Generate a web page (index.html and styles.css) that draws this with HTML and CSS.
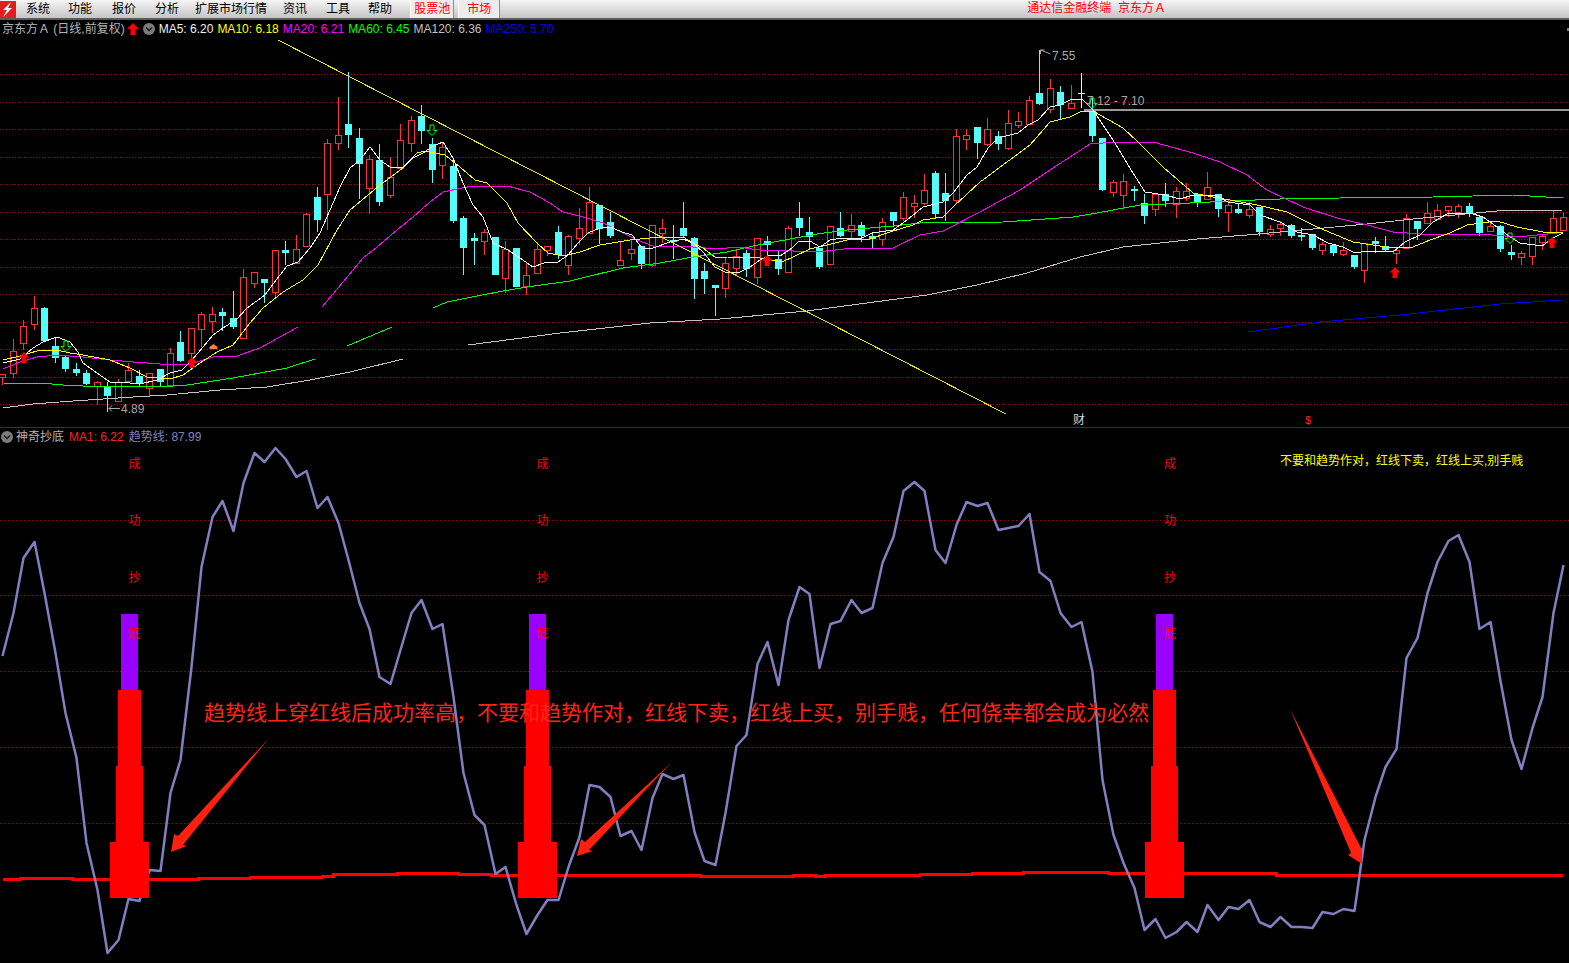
FILE: index.html
```html
<!DOCTYPE html>
<html lang="zh-CN">
<head>
<meta charset="utf-8">
<title>通达信金融终端 京东方Ａ</title>
<link rel="stylesheet" href="styles.css">
</head>
<body>
<div class="app">
  <header class="menubar">
    <svg class="logo" viewBox="0 0 16 17" width="16" height="17" aria-hidden="true">
      <rect width="16" height="17" fill="#e02020"/>
      <path d="M11 1 3 9h4l-4 7 9-9H8l3-6z" fill="#fff"/>
    </svg>
    <nav class="menu">
      <span class="menu-item">系统</span>
      <span class="menu-item">功能</span>
      <span class="menu-item">报价</span>
      <span class="menu-item">分析</span>
      <span class="menu-item">扩展市场行情</span>
      <span class="menu-item">资讯</span>
      <span class="menu-item">工具</span>
      <span class="menu-item">帮助</span>
      <span class="menu-tab">股票池</span>
      <span class="menu-tab">市场</span>
    </nav>
    <span class="title">通达信金融终端&nbsp; 京东方Ａ</span>
  </header>

  <section class="pane pane-upper">
    <div class="legend legend-upper">
      <span class="grey stock-name">京东方Ａ (日线,前复权)</span>
      <svg class="icon-up" viewBox="0 0 12 12" width="12" height="12" aria-hidden="true"><path d="M6 0l6 6H8.500v6h-5V6H0z" fill="#ff0000"/></svg>
      <svg class="icon-circle" viewBox="0 0 12 12" width="12" height="12" aria-hidden="true"><circle cx="6" cy="6" r="6" fill="#7c7c7c"/><path d="M3 4.500l3 3 3-3" fill="none" stroke="#1c1c1c" stroke-width="1.500"/></svg>
      <span class="white">MA5: 6.20</span>
      <span class="yellow">MA10: 6.18</span>
      <span class="magenta">MA20: 6.21</span>
      <span class="green">MA60: 6.45</span>
      <span class="silver">MA120: 6.36</span>
      <span class="blue">MA250: 5.70</span>
    </div>
    <span class="corner-mark"></span>
    <svg class="chart" viewBox="0 20 1569 407" width="1569" height="407">
      <defs>
        <path id="up-arrow" d="M0 0l5.500 5.500H2.500V11h-5V5.500h-3z" fill="#ff0000"/>
        <path id="down-arrow" d="M-2 0h4v5.500h3l-5 5-5-5h3z" fill="none" stroke="#00ff00"/>
      </defs>
      <path class="grid-top" d="M0 74.500H1569M0 102.500H1569M0 129.500H1569M0 157.500H1569M0 184.500H1569M0 212.500H1569M0 239.500H1569M0 267.500H1569M0 294.500H1569M0 322.500H1569M0 349.500H1569M0 377.500H1569M0 404.500H1569"/>
      <g id="candles"></g>
      <path class="level" d="M1084 110H1569"/>
      <polyline class="ma ma120" points="3,408 33,404 73,401 133,397 167,395 220,390 267,387 310,380 350,372 403,359"/>
      <polyline class="ma ma120" points="468,345 560,333 650,323 720,319 807,311 927,295 977,285 1027,273 1080,257 1123,247 1197,239 1247,235 1313,229 1367,224 1413,219 1497,211 1563,210"/>
      <polyline class="ma ma250" points="1248,332 1320,322 1400,315 1500,304 1562,300"/>
      <polyline class="ma ma60" points="3,383 52,384 63,385 83,386 173,386 187,385 207,382 233,378 260,373 287,368 315,359"/>
      <polyline class="ma ma60" points="347,346 392,327"/>
      <polyline class="ma ma60" points="433,308 447,302 477,296 503,291 527,287 570,281 623,268 660,263 693,257 727,252 753,246 790,239 817,234 847,230 893,226 920,223 1003,222 1073,217 1097,213 1140,205 1190,203 1230,201 1280,199 1340,198 1433,197 1513,195 1563,198"/>
      <polyline class="ma ma20" points="3,369 20,362 37,357 57,355 83,357 110,360 133,362 160,364 187,365 213,357 237,356 260,348 280,337 298,327"/>
      <polyline class="ma ma20" points="322,307 343,282 363,258 377,247 397,230 413,217 430,202 443,192 467,187 483,186 507,186 530,192 550,203 563,212 583,217 603,223 617,230 637,240 653,246 680,246 693,247 717,249 737,247 760,250 793,251 817,252 853,248 893,248 920,235 943,231 980,212 1020,190 1053,168 1090,144 1117,142 1153,142 1193,153 1220,162 1247,175 1267,190 1303,207 1337,218 1367,225 1393,232 1420,234 1480,234 1517,237 1557,233"/>
      <polyline class="ma ma10" points="3,360 20,356 37,351 57,350 70,353 83,355 110,360 130,368 147,377 170,379 183,375 200,363 217,352 233,345 250,323 263,308 283,292 303,280 318,265 337,230 350,210 362,200 380,185 403,168 417,153 425,151 445,155 460,167 475,180 487,183 507,203 518,223 537,243 548,253 563,256 580,252 600,245 630,240 660,237 683,237 693,243 703,248 715,257 727,257 760,258 782,262 793,257 810,249 827,245 847,240 870,239 890,232 913,225 923,220 943,217 953,207 980,182 1007,162 1030,145 1050,122 1070,117 1082,111 1093,111 1123,128 1138,142 1163,167 1193,193 1213,197 1230,200 1257,205 1287,212 1317,227 1353,242 1393,248 1413,247 1430,240 1450,233 1467,225 1497,221 1517,227 1543,232 1563,233"/>
      <polyline class="ma ma5" points="3,363 20,359 33,348 43,342 57,337 70,342 78,352 83,363 97,373 110,382 130,383 140,384 157,380 170,373 182,370 192,360 203,347 213,335 223,328 237,319 247,308 265,295 280,275 287,266 298,262 310,248 320,233 330,210 340,187 350,168 360,160 370,147 380,160 390,167 402,168 413,158 423,153 433,146 443,142 453,158 463,183 473,205 483,217 493,243 508,250 520,258 533,267 547,262 558,262 568,255 578,243 588,233 600,228 610,227 622,232 632,235 642,248 653,248 670,242 683,239 693,243 703,252 715,267 725,272 740,272 750,267 760,260 770,255 780,256 792,248 798,242 810,241 820,247 830,240 842,238 862,238 872,233 893,230 907,220 923,207 943,202 953,193 967,175 977,167 988,148 998,138 1018,133 1028,125 1038,120 1050,107 1060,105 1070,100 1082,99 1093,110 1113,140 1133,173 1145,192 1165,195 1180,199 1193,195 1217,196 1228,202 1250,205 1260,215 1280,222 1297,232 1313,235 1328,243 1343,247 1355,253 1367,251 1393,252 1405,242 1420,235 1433,222 1447,214 1470,213 1483,217 1497,227 1510,237 1520,243 1542,246 1553,238 1563,233"/>
      <path class="trend" d="M278 40L1006 414"/>
      <use href="#up-arrow" x="24" y="352"/>
      <use href="#up-arrow" x="192" y="357"/>
      <use href="#up-arrow" x="767" y="255"/>
      <use href="#up-arrow" x="1395" y="267"/>
      <use href="#up-arrow" x="1552" y="237"/>
      <use href="#down-arrow" x="66" y="341"/>
      <use href="#down-arrow" x="432" y="125"/>
      <use href="#down-arrow" x="1092" y="98"/>
      <use href="#down-arrow" x="1510" y="233"/>
      <path class="peak-mark" d="M213.500 344l4 3v2h-8v-2z"/>
      <path class="price-arrow" d="M1040.500 50l10 4M1040.500 50h4M1040.500 50v4M109 408.500h11M109 408.500l3-3M109 408.500l3 3"/>
      <text class="price" x="1052" y="60">7.55</text>
      <text class="price" x="1087" y="105">7.12 - 7.10</text>
      <text class="price" x="121" y="413">4.89</text>
      <text class="tag-cai" x="1073" y="424">财</text>
      <text class="tag-s" x="1305" y="424">$</text>
    </svg>
  </section>

  <div class="divider"></div>

  <section class="pane pane-lower">
    <div class="legend legend-lower">
      <svg class="icon-circle" viewBox="0 0 12 12" width="12" height="12" aria-hidden="true"><circle cx="6" cy="6" r="6" fill="#7c7c7c"/><path d="M3 4.500l3 3 3-3" fill="none" stroke="#1c1c1c" stroke-width="1.500"/></svg>
      <span class="grey">神奇抄底</span>
      <span class="red">MA1: 6.22</span>
      <span class="violet">趋势线: 87.99</span>
    </div>
    <svg class="chart" viewBox="0 428 1569 535" width="1569" height="535">
      <path class="grid-low" d="M0 520.500H1569M0 595.500H1569M0 671.500H1569M0 747.500H1569M0 823.500H1569"/>
      <path class="base-line" d="M3 879H20V878H72V879H198V878H250V877H322V876H333V874H397V873.500H458V874H491V875H700V876H793V875H815V876H825V875H920V874H972V873H1023V872H1108V873H1276V874H1276V875H1563"/>
      <polyline id="trend-line" class="trend-line" points=""/>
      <path class="bar-top" d="M121 614h17v76h-17zM529 614h17v76h-17zM1156 614h17v76h-17z"/>
      <path class="bar" d="M118 690h23v76h-23zM116 766h27v76h-27zM110 842h39v56h-39zM526 690h23v76h-23zM524 766h27v76h-27zM518 842h39v56h-39zM1153 690h23v76h-23zM1151 766h27v76h-27zM1145 842h39v56h-39z"/>
      <text class="signal" x="134.500" y="468">成</text>
      <text class="signal" x="134.500" y="525">功</text>
      <text class="signal" x="134.500" y="582">抄</text>
      <text class="signal" x="134.500" y="638">底</text>
      <text class="signal" x="542.500" y="468">成</text>
      <text class="signal" x="542.500" y="525">功</text>
      <text class="signal" x="542.500" y="582">抄</text>
      <text class="signal" x="542.500" y="638">底</text>
      <text class="signal" x="1170" y="468">成</text>
      <text class="signal" x="1170" y="525">功</text>
      <text class="signal" x="1170" y="582">抄</text>
      <text class="signal" x="1170" y="638">底</text>
      <text class="note" x="204" y="720">趋势线上穿红线后成功率高，不要和趋势作对，红线下卖，红线上买，别手贱，任何侥幸都会成为必然</text>
      <text class="tip" x="1280" y="465">不要和趋势作对，红线下卖，红线上买,别手贱</text>
      <path class="pointer" d="M269 738L178 836 174 834 171 852 187 846 183 845z"/>
      <path class="pointer" d="M671 763L585 842 581 839 577 856 593 851 589 850z"/>
      <path class="pointer" d="M1290 709L1351 853 1348 855 1362 864 1362 848 1361 848z"/>
    </svg>
  </section>
</div>
<script src="chart.js"></script>
</body>
</html>
```

FILE: styles.css
```css
* { box-sizing: border-box; }
html, body { margin: 0; padding: 0; background: #000; }
body {
  width: 1569px;
  height: 963px;
  overflow: hidden;
  font-family: "Liberation Sans", "Noto Sans CJK SC", sans-serif;
  font-size: 12px;
}
.app { display: flex; flex-direction: column; height: 963px; }

.menubar {
  display: flex;
  align-items: center;
  height: 20px;
  flex: none;
  color: #000;
  background: linear-gradient(#f6f6f6, #c9c9c9 90%);
  border-bottom: 2px solid #5a5a5a;
}
.logo { display: block; flex: none; }
.menu { display: flex; align-items: center; height: 100%; margin-left: 10px; gap: 18px; }
.menu-item { line-height: 18px; white-space: nowrap; }
.menu-item:nth-child(3) { margin-left: 2px; }
.menu-item:nth-child(4) { margin-left: 1px; }
.menu-item:nth-child(5) { margin-left: -2px; }
.menu-item:nth-child(6) { margin-left: -2px; }
.menu-item:nth-child(7) { margin-left: 1px; }
.menu-tab {
  height: 18px;
  line-height: 18px;
  color: #ff0000;
  padding: 0 3px;
  border-left: 1px solid #fff;
  border-right: 1px solid #8c8c8c;
  background: #ececec;
}
.menu-tab:nth-child(9) { margin-left: 0; }
.menu-tab:nth-child(10) { margin-left: -14px; padding: 0 8px; }
.title { margin-left: auto; margin-right: 403px; color: #ff0000; line-height: 14px; margin-bottom: 3px; white-space: nowrap; }

.pane { position: relative; flex: none; }
.pane-upper { height: 407px; }
.pane-lower { height: 535px; }
.chart { display: block; }
.divider { height: 1px; flex: none; background: #a80000; }

.legend {
  position: absolute;
  left: 0;
  display: flex;
  align-items: center;
  white-space: nowrap;
  line-height: 14px;
  z-index: 1;
}
.legend-upper { top: 2px; left: 2px; gap: 4px; }
.stock-name { margin-right: -2px; }
.legend-lower { top: 2px; left: 1px; gap: 5px; }
.legend-lower .grey { margin-left: -2px; }
.icon-up, .icon-circle { display: block; flex: none; }
.grey { color: #b4b4b4; }
.white { color: #f0f0f0; }
.yellow { color: #ffff00; }
.magenta { color: #ff00ff; }
.green { color: #00ff00; }
.silver { color: #c0c0c0; }
.blue { color: #0000ff; }
.red { color: #ff2020; }
.violet { color: #8080c0; }
.corner-mark { position: absolute; top: 8px; right: 0; width: 2px; height: 3px; background: #808080; }

.grid-top { stroke: #c00000; stroke-width: 1; stroke-dasharray: 1 2; fill: none; shape-rendering: crispEdges; }
.grid-low { stroke: #a80000; stroke-width: 1; stroke-dasharray: 1 3; fill: none; shape-rendering: crispEdges; }
.candle-red { fill: #000; stroke: #ff3232; stroke-width: 1; shape-rendering: crispEdges; }
.candle-cyan { fill: #54fcfc; stroke: none; shape-rendering: crispEdges; }
.wick-cyan { fill: none; stroke: #54fcfc; stroke-width: 1; shape-rendering: crispEdges; }
.candle-white { fill: none; stroke: #f0f0f0; stroke-width: 1; shape-rendering: crispEdges; }
.level { stroke: #989898; stroke-width: 2; fill: none; shape-rendering: crispEdges; }
.ma { fill: none; stroke-width: 1; shape-rendering: crispEdges; stroke-linejoin: round; }
.ma5 { stroke: #f4f4f4; }
.ma10 { stroke: #ffff00; }
.ma20 { stroke: #ff00ff; }
.ma60 { stroke: #00ff00; }
.ma120 { stroke: #c4c4c4; }
.ma250 { stroke: #0000e8; }
.trend { stroke: #e8e800; stroke-width: 1; fill: none; shape-rendering: crispEdges; }
.peak-mark { fill: #ff8040; }
.price-arrow { stroke: #a8a8a8; stroke-width: 1; fill: none; }
.price { fill: #a8a8a8; font-size: 12px; }
.tag-cai { fill: #bcd8ff; font-size: 12px; }
.tag-s { fill: #ff2020; font-size: 11px; }

.base-line { fill: none; stroke: #ff0000; stroke-width: 3; shape-rendering: crispEdges; }
.trend-line { fill: none; stroke: #8080c0; stroke-width: 2.500; stroke-linejoin: round; }
.bar-top { fill: #9900ff; shape-rendering: crispEdges; }
.bar { fill: #ff0000; shape-rendering: crispEdges; }
.signal { fill: #ff0000; font-size: 12px; text-anchor: middle; }
.note { fill: #ff2318; font-size: 21px; }
.tip { fill: #ffff00; font-size: 12px; }
.pointer { fill: #ff2010; }
```

FILE: chart.js
```js
// [high, bodyTop, bodyBottom, low, kind]  kind: 1 red, 0 cyan, 2 white doji
var C = [
[374,374,377,385,1],[339,351,373,378,1],[320,326,343,350,1],[296,308,324,330,1],[307,308,341,341,0],
[338,346,358,363,0],[355,357,369,372,0],[363,369,373,376,0],[370,373,384,385,0],[381,382,386,405,1],
[382,386,396,412,0],[379,382,401,401,1],[363,370,381,381,1],[370,376,383,387,0],[373,373,388,397,1],
[369,369,382,386,0],[348,353,385,387,1],[331,342,361,362,0],[328,328,353,367,1],[312,314,329,347,1],
[307,314,321,333,1],[308,312,316,331,0],[291,318,327,329,0],[269,277,338,338,1],[272,272,283,288,1],
[279,279,283,303,0],[250,250,292,297,1],[241,250,253,265,0],[235,249,263,263,1],[213,214,246,246,1],
[187,197,220,232,0],[139,143,194,230,1],[97,135,143,150,1],[72,124,135,148,0],[128,138,164,199,0],
[155,159,188,214,1],[144,160,202,206,0],[157,177,195,198,1],[124,140,168,168,1],[116,120,143,152,1],
[105,116,131,144,0],[138,144,170,183,0],[143,147,165,179,1],[160,166,221,223,0],[216,218,248,275,0],
[233,238,241,265,0],[229,232,241,255,1],[237,237,275,275,0],[241,249,278,293,1],[248,248,287,287,0],
[263,275,286,295,1],[242,249,273,273,1],[246,246,250,256,1],[226,232,255,259,0],[235,236,265,275,1],
[208,228,238,245,1],[187,202,233,233,1],[205,205,229,244,0],[212,222,236,238,0],[242,260,265,265,1],
[240,249,253,260,1],[246,246,264,269,0],[225,225,265,267,1],[219,228,233,243,1],[225,240,242,259,0],
[202,228,236,237,0],[237,238,279,299,0],[263,271,279,294,0],[285,285,288,316,0],[257,263,288,298,1],
[249,256,268,275,1],[250,253,269,277,0],[238,238,277,284,1],[236,241,245,257,0],[250,259,269,275,0],
[226,228,272,272,1],[202,218,228,236,0],[217,232,237,250,0],[248,248,267,269,0],[226,226,264,265,1],
[212,228,236,237,0],[214,225,231,240,1],[222,225,236,242,0],[232,236,239,249,0],[218,222,239,246,1],
[212,212,221,227,0],[192,197,218,221,1],[195,203,206,218,1],[174,190,203,205,1],[171,173,214,218,0],
[173,193,201,221,0],[129,136,200,203,1],[129,135,139,150,1],[127,127,143,159,0],[118,129,144,146,1],
[131,136,144,150,0],[110,123,148,150,1],[112,121,125,128,1],[96,100,124,125,1],[50,93,104,105,0],
[79,88,109,113,1],[86,92,105,120,0],[85,103,108,108,1],[73,93,93,108,2],[98,110,136,142,0],
[138,138,190,191,0],[180,182,192,197,1],[174,181,195,209,1],[186,189,191,201,0],[194,203,216,224,0],
[194,194,209,216,1],[183,194,201,207,0],[187,191,204,218,1],[183,191,198,201,1],[194,194,203,207,0],
[172,187,199,199,1],[194,194,209,217,0],[200,205,212,232,1],[203,209,213,214,0],[202,209,215,218,1],
[207,207,232,236,0],[225,229,234,237,1],[221,224,228,236,1],[224,225,236,238,0],[228,235,237,241,0],
[234,234,248,250,0],[242,244,250,255,1],[244,245,253,256,0],[242,250,254,256,1],[255,255,267,269,0],
[243,243,270,283,1],[237,241,244,253,0],[236,246,250,251,0],[247,250,253,264,1],[214,218,248,248,1],
[221,221,229,240,0],[202,213,223,223,1],[204,210,219,219,1],[206,206,210,217,1],[204,206,212,218,1],
[203,206,213,217,0],[216,217,233,236,0],[221,226,231,231,1],[225,226,249,252,0],[245,252,255,260,0],
[251,253,257,265,1],[237,237,256,265,1],[234,236,242,250,1],[210,218,233,233,1],[213,217,230,230,1]
];

var T = [656,613,558,542,593,653,713,758,843,890,953,940,899,901,870,871,793,760,667,567,
517,501,531,483,453,462,448,459,477,471,508,497,523,560,603,629,677,684,650,613,
600,629,624,697,773,815,825,874,867,905,934,915,900,900,867,837,785,787,797,836,
831,850,798,774,779,775,832,861,865,813,746,735,664,642,685,620,587,594,668,624,
621,600,613,608,563,537,491,482,491,550,563,525,502,506,503,530,528,526,514,572,
581,613,627,622,672,780,835,863,888,930,919,938,932,922,932,905,920,907,909,900,
922,927,917,927,927,928,912,914,909,911,840,797,767,749,658,638,593,562,541,535,
562,629,622,681,740,769,728,697,613,565];

function xAt(i) { return Math.floor(2.9 + 10.475 * i) + 0.5; }

var red = "", cyanBody = "", cyanWick = "", white = "";
C.forEach(function (c, i) {
  var x = xAt(i), hi = c[0], top = c[1], bot = c[2], lo = c[3], k = c[4];
  if (k === 1) {
    red += "M" + x + " " + hi + "V" + top + "M" + x + " " + (bot + 0.5) + "V" + lo;
    red += "M" + (x - 3) + " " + (top + 0.5) + "h6V" + (bot + 0.5) + "h-6z";
  } else if (k === 0) {
    cyanWick += "M" + x + " " + hi + "V" + lo;
    cyanBody += "M" + (x - 3.5) + " " + top + "h7V" + Math.max(bot, top + 2) + "h-7z";
  } else {
    white += "M" + x + " " + hi + "V" + lo + "M" + (x - 3.5) + " " + (top + 0.5) + "h7";
  }
});

var NS = "http://www.w3.org/2000/svg";
var layer = document.getElementById("candles");
[["candle-red", red], ["wick-cyan", cyanWick], ["candle-cyan", cyanBody], ["candle-white", white]].forEach(function (p) {
  var el = document.createElementNS(NS, "path");
  el.setAttribute("class", p[0]);
  el.setAttribute("d", p[1]);
  layer.appendChild(el);
});

document.getElementById("trend-line").setAttribute("points", T.map(function (y, i) {
  return xAt(i) + "," + y;
}).join(" "));
```
